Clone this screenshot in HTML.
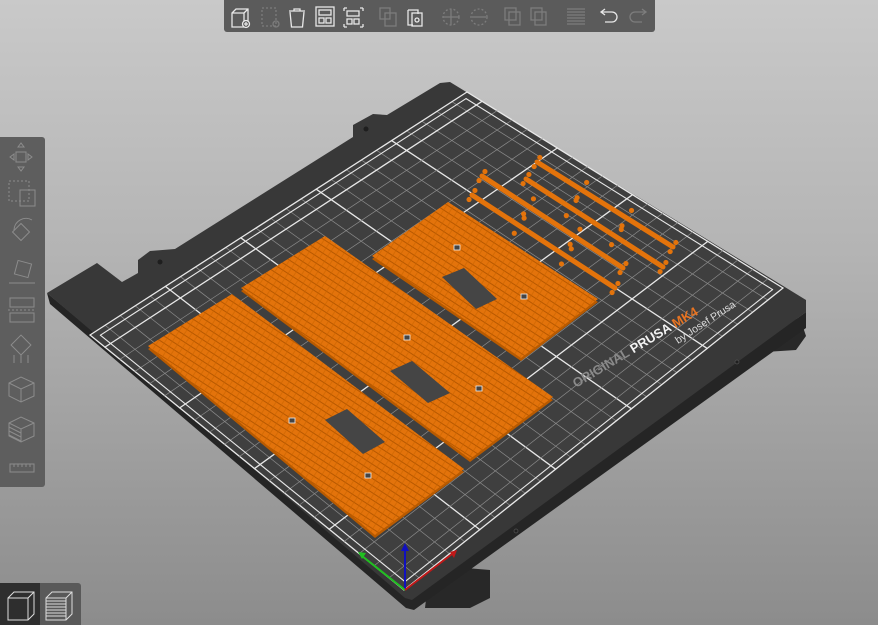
<!DOCTYPE html>
<html><head><meta charset="utf-8">
<style>
html,body{margin:0;padding:0;}
body{width:878px;height:625px;overflow:hidden;position:relative;background:linear-gradient(#c9c9c9 0%,#b4b4b4 40%,#8c8c8c 100%);font-family:"Liberation Sans",sans-serif;}
svg{position:absolute;left:0;top:0;}
.tb{position:absolute;background:#5b5b5b;}
</style></head><body>
<svg id="s" width="878" height="625" viewBox="0 0 878 625">
<defs>
<pattern id="pt" width="6" height="6" patternUnits="userSpaceOnUse" patternTransform="rotate(33)">
<rect width="6" height="6" fill="#e3730b"/>
<rect width="6" height="1" fill="#b75800"/>
<rect width="1" height="6" fill="#c96400" opacity="0.6"/>
</pattern>
</defs>
<polygon points="430,565 490,570 490,598 470,608 425,608" fill="#282828"/>
<polygon points="755,330 800,318 806,336 796,350 765,352" fill="#282828"/>
<polygon points="47,293 410,598 806,312 806,328 414,610 406,608 50,304" fill="#252525"/>
<polygon id="plate" points="47,293 97,263 122,282 138,273 138,260 150,251 175,249 353,137 353,125 373,114 387,115 440,83 450,82 806,300 806,312 412,600 405,598" fill="#383838"/>
<polygon points="467,92 783,288 404,590 90,335" fill="#3f3f3f"/>
<g id="grid" stroke-linecap="round"></g>
<circle cx="366" cy="129" r="2.5" fill="#1e1e1e"/>
<circle cx="160" cy="262" r="2.5" fill="#1e1e1e"/>
<circle cx="737" cy="362" r="2" fill="#202020" stroke="#555" stroke-width="0.7"/>
<circle cx="516" cy="531" r="2" fill="#202020" stroke="#555" stroke-width="0.7"/>
<g transform="translate(576,388) rotate(-31)" font-weight="bold" font-size="13">
<text x="0" y="0" fill="#8a8a8a">ORIGINAL</text>
<text x="67" y="0" fill="#f2f2f2">PRUSA</text>
<text x="116" y="0" fill="#e87422">MK4</text>
</g>
<text transform="translate(678,344) rotate(-33)" font-size="10.5" fill="#dddddd">by Josef Prusa</text>
<polygon points="148,349 232,297 464,472 375,538" fill="#b85a00"/>
<polygon points="148,346 232,294 464,469 375,535" fill="url(#pt)"/>
<polygon points="325,420 347,409 385,442 363,454" fill="#454545"/>
<polygon points="241,291 325,239 553,400 470,462" fill="#b85a00"/>
<polygon points="241,288 325,236 553,397 470,459" fill="url(#pt)"/>
<polygon points="390,371 412,361 450,393 428,403" fill="#454545"/>
<polygon points="372,259 448,205 598,302 521,361" fill="#b85a00"/>
<polygon points="372,256 448,202 598,299 521,358" fill="url(#pt)"/>
<polygon points="442,277 464,268 497,299 476,309" fill="#454545"/>
<g fill="#444" stroke="#eee" stroke-width="0.8">
<rect x="289" y="418" width="6" height="5"/><rect x="365" y="473" width="6" height="5"/>
<rect x="404" y="335" width="6" height="5"/><rect x="476" y="386" width="6" height="5"/>
<rect x="454" y="245" width="6" height="5"/><rect x="521" y="294" width="6" height="5"/>
</g>
<g id="rods"></g>
<line x1="405" y1="590" x2="405" y2="550" stroke="#1010c0" stroke-width="2"/>
<polygon points="401,551 409,551 405,543" fill="#1010c0"/>
<line x1="405" y1="590" x2="362" y2="556" stroke="#20c020" stroke-width="2"/>
<polygon points="358,552 366,553 362,559" fill="#20c020"/>
<line x1="405" y1="590" x2="452" y2="554" stroke="#c01818" stroke-width="2"/>
<polygon points="457,550 450,552 454,558" fill="#c01818"/>
</svg>

<div class="tb" style="left:224px;top:0;width:431px;height:32px;border-radius:0 0 3px 3px;"></div>
<svg width="878" height="40" viewBox="0 0 878 40" fill="none" stroke-width="1.3">
<g stroke="#e8e8e8">
<path d="M232,13 l4,-4 h12 v14 l-4,4 h-12 z M232,13 h12 v14 M244,13 l4,-4"/><circle cx="246" cy="24" r="3.5" fill="#5b5b5b"/><path d="M246,22 v4 M244,24 h4"/>
<path d="M289,11 h16 M294,11 v-2 h6 v2 M290,12 l1.5,15 h11 l1.5,-15"/>
<rect x="316" y="7" width="18" height="19"/><rect x="319" y="10" width="12" height="5"/><rect x="319" y="18" width="5" height="5"/><rect x="326" y="18" width="5" height="5"/>
<path d="M344,8 h3 M344,8 v3 M363,8 h-3 M363,8 v3 M344,27 h3 M344,27 v-3 M363,27 h-3 M363,27 v-3"/><rect x="347" y="11" width="12" height="5"/><rect x="347" y="19" width="5" height="5"/><rect x="354" y="19" width="5" height="5"/>
<path d="M408,10 h10 v4 M408,10 v15 h5"/><rect x="412" y="13" width="10" height="13"/><circle cx="417" cy="20" r="2"/>
<path d="M602,12 h10 a5,5 0 0 1 0,10 h-7 M605,9 l-4,3 l4,3"/>
</g>
<g stroke="#7d7d7d">
<rect x="262" y="8" width="14" height="18" stroke-dasharray="2,2"/><circle cx="276" cy="24" r="3"/>
<rect x="380" y="8" width="10" height="11"/><rect x="385" y="13" width="11" height="13"/>
<circle cx="451" cy="17" r="8" stroke-dasharray="2,2"/><path d="M443,17 h16 M451,9 v16"/>
<circle cx="479" cy="17" r="8" stroke-dasharray="2,2"/><path d="M472,17 h14"/>
<rect x="505" y="8" width="11" height="12"/><rect x="509" y="12" width="11" height="13"/>
<rect x="531" y="8" width="11" height="12"/><rect x="535" y="12" width="11" height="13"/>
<path d="M567,9 h18 M567,12 h18 M567,15 h18 M567,18 h18 M567,21 h18 M567,24 h18"/>
<path d="M645,12 h-10 a5,5 0 0 0 0,10 h7 M642,9 l4,3 l-4,3"/>
</g>
</svg>

<div class="tb" style="left:0;top:137px;width:45px;height:350px;border-radius:0 3px 3px 0;background:#5e5e5e;"></div>
<svg width="60" height="625" viewBox="0 0 60 625" fill="none" stroke="#8c8c8c" stroke-width="1">
<rect x="16" y="152" width="10" height="10"/><path d="M21,143 l-3,4 h6 z M21,171 l-3,-4 h6 z M10,157 l4,-3 v6 z M32,157 l-4,-3 v6 z"/>
<rect x="9" y="181" width="20" height="20" stroke-dasharray="2,2"/><rect x="20" y="190" width="15" height="16"/>
<path d="M14,230 a12,12 0 0 1 18,-10"/><rect x="15" y="226" width="12" height="12" transform="rotate(45 21 232)"/>
<rect x="16" y="262" width="14" height="14" transform="rotate(15 23 269)"/><path d="M9,283 h26"/>
<rect x="10" y="298" width="24" height="9"/><rect x="10" y="313" width="24" height="9"/><path d="M8,310 h28" stroke-dasharray="2,2"/>
<rect x="14" y="338" width="14" height="14" transform="rotate(45 21 345)"/><path d="M14,355 v8 M21,355 v8 M28,355 v8"/>
<path d="M9,383 l12,-6 l13,6 v13 l-13,6 l-12,-6 z M9,383 l12,6 l13,-6 M21,389 v13"/>
<path d="M9,423 l12,-6 l13,6 v13 l-13,6 l-12,-6 z M9,423 l12,6 l13,-6 M21,429 v13 M9,427 l12,6 M9,431 l12,6 M9,435 l12,6"/>
<rect x="10" y="464" width="24" height="8"/><path d="M14,464 v3 M18,464 v3 M22,464 v3 M26,464 v3 M30,464 v3"/>
</svg>

<div style="position:absolute;left:0;top:583px;width:40px;height:42px;background:#2e2e2e;"></div>
<div style="position:absolute;left:40px;top:583px;width:41px;height:42px;background:#595959;border-radius:0 3px 0 0;"></div>
<svg width="90" height="625" viewBox="0 0 90 625" fill="none" stroke="#dddddd" stroke-width="1">
<path d="M8,598 l6,-6 h20 v22 l-6,6 h-20 z M8,598 h20 v22 M28,598 l6,-6"/>
<path d="M46,598 l6,-6 h20 v22 l-6,6 h-20 z M46,598 h20 v22 M66,598 l6,-6 M46,601 h20 M46,604 h20 M46,607 h20 M46,610 h20 M46,613 h20 M46,616 h20"/>
</svg>

<script>
(function(){
var NS="http://www.w3.org/2000/svg";
var B=[404,590],R=[783,288],L=[90,335],T=[467,92];
function P(u,v){return [(1-u)*(1-v)*B[0]+u*(1-v)*R[0]+(1-u)*v*L[0]+u*v*T[0],(1-u)*(1-v)*B[1]+u*(1-v)*R[1]+(1-u)*v*L[1]+u*v*T[1]];}
var g=document.getElementById('grid');
function ln(a,b,c,w){var l=document.createElementNS(NS,'line');l.setAttribute('x1',a[0]);l.setAttribute('y1',a[1]);l.setAttribute('x2',b[0]);l.setAttribute('y2',b[1]);l.setAttribute('stroke',c);l.setAttribute('stroke-width',w);g.appendChild(l);}
for(var i=0;i<=25;i++){var u=i/25;var maj=(i%5==0);ln(P(u,0),P(u,1),maj?"#e8e8e8":"#8a8a8a",maj?1.3:0.7);}
for(var j=0;j<=21;j++){var v=j/21;var maj=(j%5==0)||j==21;ln(P(0,v),P(1,v),maj?"#e8e8e8":"#8a8a8a",maj?1.3:0.7);}
var o=[[0.015,0.015],[0.985,0.015],[0.985,0.985],[0.015,0.985]];
for(var k=0;k<4;k++){ln(P(o[k][0],o[k][1]),P(o[(k+1)%4][0],o[(k+1)%4][1]),"#e8e8e8",1.1);}
var r=document.getElementById('rods');
var rods=[[472,195,615,288],[482,176,623,268],[526,179,663,267],[537,162,673,247]];
rods.forEach(function(d){
 var l=document.createElementNS(NS,'line');l.setAttribute('x1',d[0]);l.setAttribute('y1',d[1]);l.setAttribute('x2',d[2]);l.setAttribute('y2',d[3]);
 l.setAttribute('stroke','#e3730b');l.setAttribute('stroke-width','5');l.setAttribute('stroke-linecap','round');r.appendChild(l);
 var dx=d[2]-d[0],dy=d[3]-d[1],len=Math.sqrt(dx*dx+dy*dy),nx=-dy/len*9,ny=dx/len*9;
 [0,0.33,0.66,1].forEach(function(t){[1,-1].forEach(function(s){
  var c=document.createElementNS(NS,'circle');c.setAttribute('cx',d[0]+dx*t+nx*s*(t==0||t==1?0.6:1));c.setAttribute('cy',d[1]+dy*t+ny*s*(t==0||t==1?0.6:1));c.setAttribute('r','2.6');c.setAttribute('fill','#e3730b');r.appendChild(c);});});
});
})();
</script>
</body></html>
